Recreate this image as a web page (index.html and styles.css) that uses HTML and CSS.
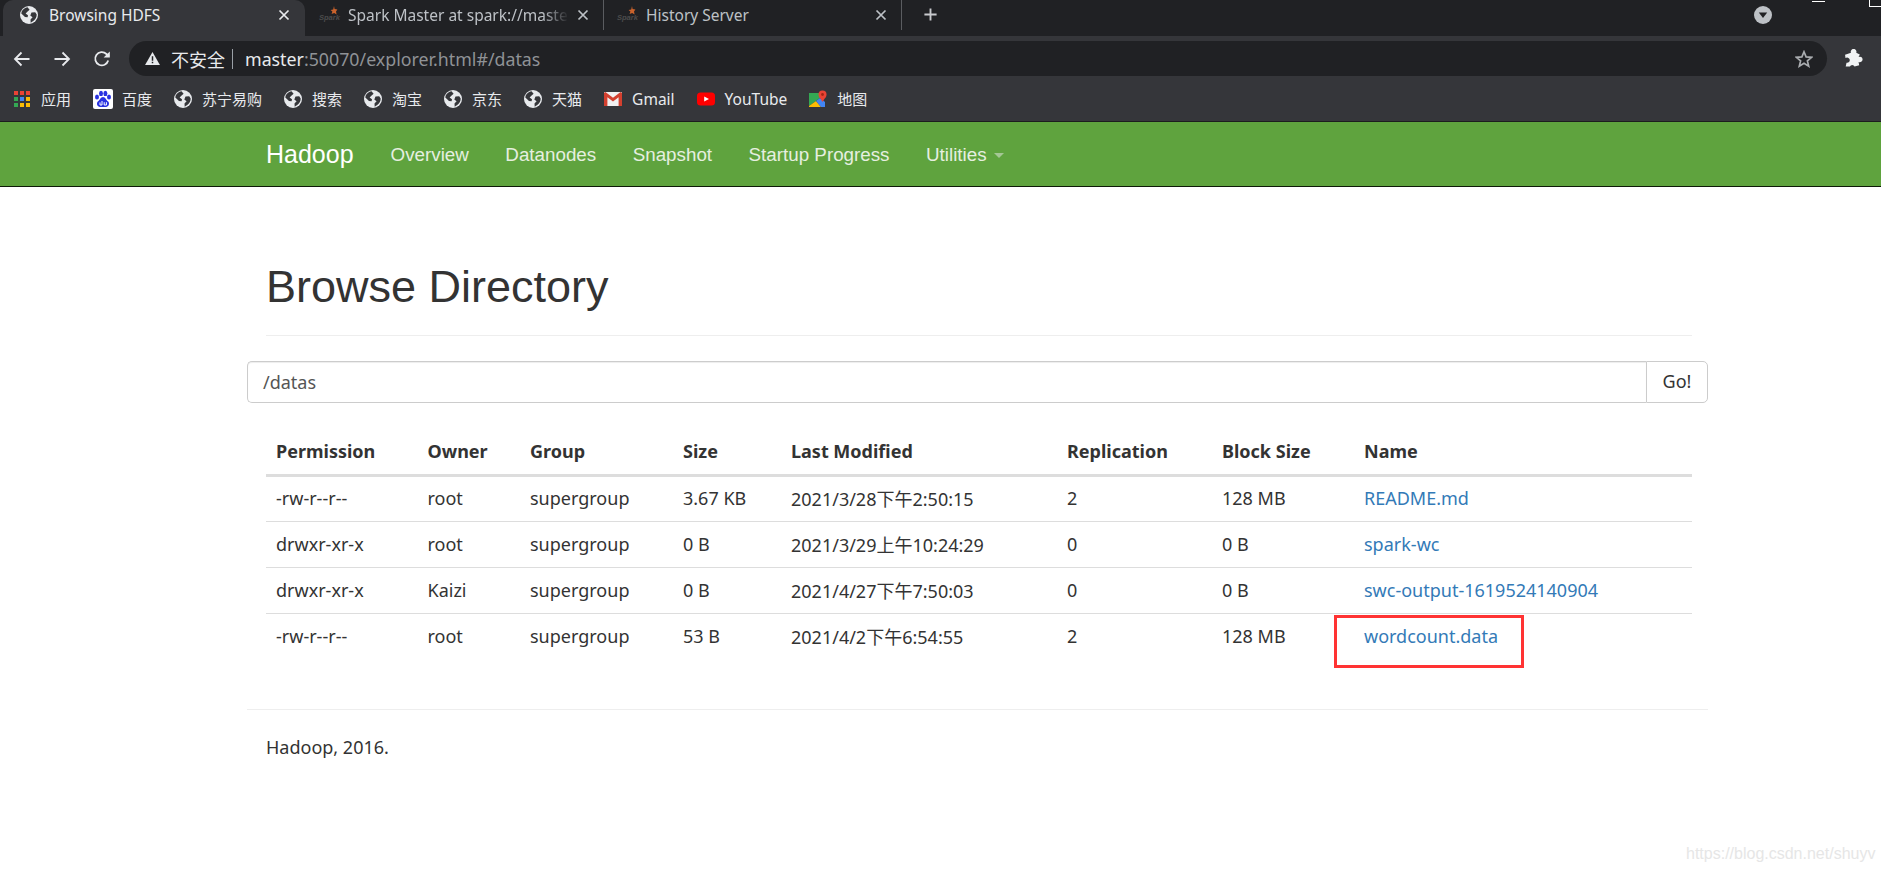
FILE: index.html
```html
<!DOCTYPE html>
<html lang="zh">
<head>
<meta charset="utf-8">
<title>Browsing HDFS</title>
<link rel="stylesheet" href="styles.css">
</head>
<body>
<svg class="defs" width="0" height="0" aria-hidden="true">
  <symbol id="globe" viewBox="0 0 18 18">
    <circle cx="9" cy="9" r="9" fill="#e8eaed"/>
    <path d="M7.5 1.2 C5 1.6 2.8 3.2 1.7 5.4 L1.3 7.6 L5 11 L7.6 11.3 L8 9.3 L5.6 7.4 L7.6 5.6 L9.6 3.8 Z" fill="#35363a"/>
    <path d="M11.5 6.6 L15.2 6.2 L16.7 8.4 C16.7 11 15.4 13.4 13.2 15.1 L10.7 16.7 L10.5 13.4 L12.6 11.2 L10.3 9.4 Z" fill="#35363a"/>
  </symbol>
  <symbol id="spark" viewBox="0 0 18 18" overflow="visible">
    <text x="-2" y="14" font-family="Liberation Sans" font-size="7.5" font-style="italic" font-weight="700" fill="#4c4c4c">Spark</text>
    <path d="M13 0 L13.6 3 L16.4 3.6 L15 5.4 L15.6 8.6 L13.2 7 L10.6 8 L11.4 5.4 L9.6 4 L12.2 3.4 Z" fill="#c9622c"/>
  </symbol>
  <symbol id="close" viewBox="0 0 12 12">
    <path d="M1.5 1.5 L10.5 10.5 M10.5 1.5 L1.5 10.5" fill="none" stroke="currentColor" stroke-width="1.7"/>
  </symbol>
</svg>

<header class="chrome">
  <div class="tabstrip">
    <div class="tab tab-active">
      <svg class="favicon"><use href="#globe"/></svg>
      <span class="tab-title">Browsing HDFS</span>
      <svg class="tab-close"><use href="#close"/></svg>
    </div>
    <div class="tab">
      <svg class="favicon"><use href="#spark"/></svg>
      <span class="tab-title tab-fade">Spark Master at spark://master</span>
      <svg class="tab-close"><use href="#close"/></svg>
    </div>
    <div class="tab">
      <svg class="favicon"><use href="#spark"/></svg>
      <span class="tab-title">History Server</span>
      <svg class="tab-close"><use href="#close"/></svg>
    </div>
    <svg class="newtab" viewBox="0 0 16 16"><path d="M8 1.5 V14.5 M1.5 8 H14.5" fill="none" stroke="#c8cacd" stroke-width="2"/></svg>
    <svg class="profile-menu" viewBox="0 0 18 18"><circle cx="9" cy="9" r="9" fill="#bdc1c6"/><path d="M4.8 6.6 H13.2 L9 12 Z" fill="#202124"/></svg>
  </div>
  <div class="toolbar">
    <div class="navrow">
      <svg class="navbtn" viewBox="0 0 18 18"><path d="M16.5 9 H2 M8.5 2.5 L2 9 L8.5 15.5" fill="none" stroke="#e8eaed" stroke-width="1.8"/></svg>
      <svg class="navbtn" viewBox="0 0 18 18"><path d="M1.5 9 H16 M9.5 2.5 L16 9 L9.5 15.5" fill="none" stroke="#e8eaed" stroke-width="1.8"/></svg>
      <svg class="navbtn" viewBox="0 0 18 18"><path d="M15.2 10.5 A6.6 6.6 0 1 1 13.4 4 L16 6.4" fill="none" stroke="#e8eaed" stroke-width="1.8"/><path d="M16.8 1.4 V7.6 H10.6 Z" fill="#e8eaed"/></svg>
      <div class="omnibox">
        <svg class="warn" viewBox="0 0 16 14"><path d="M8 0 L16 14 H0 Z" fill="#e8eaed"/><path d="M7.2 4.6 H8.8 V9.4 H7.2 Z M7.2 10.6 H8.8 V12.2 H7.2 Z" fill="#202124"/></svg>
        <span class="insecure">不安全</span>
        <span class="omni-sep"></span>
        <span class="url"><span class="url-host">master</span>:50070/explorer.html#/datas</span>
        <svg class="star" viewBox="0 0 18 18"><path d="M9 1.8 L11.1 6.9 L16.6 7.3 L12.4 10.9 L13.7 16.2 L9 13.3 L4.3 16.2 L5.6 10.9 L1.4 7.3 L6.9 6.9 Z" fill="none" stroke="#a9acaf" stroke-width="1.7"/></svg>
      </div>
      <svg class="puzzle" viewBox="0 0 18 18"><path d="M6.6 3.6 A2.7 2.7 0 1 1 11.6 3.6 L15 5.2 L13.8 7.6 A2.6 2.6 0 1 1 13.8 12.2 L14.4 15.4 L10 16.6 A2.4 2.4 0 0 0 5.6 16.6 L1.6 16.6 L2.4 13 A2.5 2.5 0 1 0 1.4 8.6 L1 5.4 Z" fill="#f1f3f4"/></svg>
    </div>
    <nav class="bookmarks">
      <a class="bm">
        <svg class="bm-icon" viewBox="0 0 18 18"><g fill="#ea4335"><rect x="1" y="1" width="4" height="4"/><rect x="7" y="1" width="4" height="4"/><rect x="13" y="1" width="4" height="4"/></g><g fill="#34a853"><rect x="1" y="7" width="4" height="4"/><rect x="1" y="13" width="4" height="4"/></g><rect x="7" y="7" width="4" height="4" fill="#4285f4"/><rect x="13" y="7" width="4" height="4" fill="#fbbc05"/><rect x="7" y="13" width="4" height="4" fill="#fbbc05"/><rect x="13" y="13" width="4" height="4" fill="#fbbc05"/></svg>
        <span>应用</span>
      </a>
      <a class="bm">
        <svg class="bm-icon bm-wide" viewBox="0 0 20 20"><rect width="20" height="20" rx="2" fill="#fff"/><g fill="#2932e1"><ellipse cx="4" cy="8" rx="2" ry="2.6"/><ellipse cx="8" cy="4.4" rx="2" ry="2.7"/><ellipse cx="12.4" cy="4.4" rx="2" ry="2.7"/><ellipse cx="16" cy="8" rx="2" ry="2.6"/><path d="M10 8 C7.5 8 7 11 4.8 12.6 C3 14.6 4.4 18 7 18 H13 C15.6 18 17 14.6 15.2 12.6 C13 11 12.5 8 10 8 Z"/></g><path d="M7 13.4 V16 H9 M9 12 V16 M11.2 13.2 V16 H13.4 V13.2" fill="none" stroke="#fff" stroke-width="1"/></svg>
        <span>百度</span>
      </a>
      <a class="bm"><svg class="bm-icon"><use href="#globe"/></svg><span>苏宁易购</span></a>
      <a class="bm"><svg class="bm-icon"><use href="#globe"/></svg><span>搜索</span></a>
      <a class="bm"><svg class="bm-icon"><use href="#globe"/></svg><span>淘宝</span></a>
      <a class="bm"><svg class="bm-icon"><use href="#globe"/></svg><span>京东</span></a>
      <a class="bm"><svg class="bm-icon"><use href="#globe"/></svg><span>天猫</span></a>
      <a class="bm bm-latin">
        <svg class="bm-icon" viewBox="0 0 18 18"><rect x="0" y="2" width="18" height="14" rx="1" fill="#f1f1f1"/><path d="M0 3 V16 H3.4 V7.2 L9 11.4 L14.6 7.2 V16 H18 V3 L16.6 2 L9 7.8 L1.4 2 Z" fill="#d3402f"/></svg>
        <span>Gmail</span>
      </a>
      <a class="bm bm-latin">
        <svg class="bm-icon" viewBox="0 0 18 18"><rect x="0" y="2.5" width="18" height="13" rx="3.5" fill="#f00"/><path d="M7.2 6.4 L12 9 L7.2 11.6 Z" fill="#fff"/></svg>
        <span>YouTube</span>
      </a>
      <a class="bm">
        <svg class="bm-icon" viewBox="0 0 18 18"><path d="M0 3 L11 3 L11 8 L0 16 Z" fill="#34a853"/><path d="M0 16 L7 11 L12 17 H0 Z" fill="#fbbc05"/><path d="M7 11 L11 8 L16 12 V17 H12 Z" fill="#4285f4"/><circle cx="13.5" cy="4.5" r="4" fill="#ea4335"/><path d="M10.2 6.8 L13.5 12 L16.8 6.8 Z" fill="#ea4335"/><circle cx="13.5" cy="4.5" r="1.4" fill="#a52714"/></svg>
        <span>地图</span>
      </a>
    </nav>
  </div>
  <span class="win-min"></span>
  <span class="win-max"></span>
</header>

<nav class="navbar">
  <a class="brand">Hadoop</a>
  <a class="nav-link">Overview</a>
  <a class="nav-link">Datanodes</a>
  <a class="nav-link">Snapshot</a>
  <a class="nav-link">Startup Progress</a>
  <a class="nav-link">Utilities<span class="caret"></span></a>
</nav>

<main class="container">
  <div class="page-header"><h1>Browse Directory</h1></div>
  <div class="input-group">
    <div class="path-input">/datas</div>
    <button class="go-btn" type="button">Go!</button>
  </div>
  <table class="listing">
    <thead>
      <tr>
        <th class="c1">Permission</th><th class="c2">Owner</th><th class="c3">Group</th><th class="c4">Size</th>
        <th class="c5">Last Modified</th><th class="c6">Replication</th><th class="c7">Block Size</th><th class="c8">Name</th>
      </tr>
    </thead>
    <tbody>
      <tr><td>-rw-r--r--</td><td>root</td><td>supergroup</td><td>3.67 KB</td><td>2021/3/28下午2:50:15</td><td>2</td><td>128 MB</td><td><a>README.md</a></td></tr>
      <tr><td>drwxr-xr-x</td><td>root</td><td>supergroup</td><td>0 B</td><td>2021/3/29上午10:24:29</td><td>0</td><td>0 B</td><td><a>spark-wc</a></td></tr>
      <tr><td>drwxr-xr-x</td><td>Kaizi</td><td>supergroup</td><td>0 B</td><td>2021/4/27下午7:50:03</td><td>0</td><td>0 B</td><td><a>swc-output-1619524140904</a></td></tr>
      <tr><td>-rw-r--r--</td><td>root</td><td>supergroup</td><td>53 B</td><td>2021/4/2下午6:54:55</td><td>2</td><td>128 MB</td><td><a>wordcount.data</a></td></tr>
    </tbody>
  </table>
  <footer class="page-footer"><p>Hadoop, 2016.</p></footer>
</main>

<div class="annotation"></div>
<div class="watermark">https://blog.csdn.net/shuyv</div>
</body>
</html>
```
FILE: styles.css
```css
* { box-sizing: border-box; }
html, body { margin: 0; padding: 0; }
body {
  width: 1881px;
  height: 872px;
  overflow: hidden;
  position: relative;
  background: #fff;
  color: #333;
  font-family: "Noto Sans", "Noto Sans CJK SC", sans-serif;
}
.defs { position: absolute; }

/* Browser chrome */
.chrome { position: relative; height: 122px; background: #35363a; border-bottom: 1px solid #1c1c1e; }
.tabstrip { display: flex; align-items: flex-start; height: 36px; background: #202124; position: relative; }
.tab {
  display: flex; align-items: center;
  width: 298px; height: 30px;
  padding: 0 14px 0 15px;
  color: #bdc1c6;
  border-right: 1px solid #5a5c60;
}
.tab-active {
  width: 302px; height: 36px; margin-left: 3px;
  padding: 0 15px 6px 17px;
  margin-right: 1px;
  color: #e8eaed;
  background: #35363a;
  border-right: 0;
  border-radius: 10px 10px 0 0;
}
.favicon { width: 18px; height: 18px; flex: none; overflow: visible; }
.tab-title {
  flex: 1; min-width: 0; margin-left: 9px;
  font-size: 15.5px; white-space: nowrap; overflow: hidden;
}
.tab-active .tab-title { margin-left: 11px; }
.tab-fade {
  -webkit-mask-image: linear-gradient(to right, #000 88%, transparent 100%);
  mask-image: linear-gradient(to right, #000 88%, transparent 100%);
}
.tab-close { width: 12px; height: 12px; flex: none; margin-left: 8px; }
.newtab { width: 15px; height: 15px; margin: 7px 0 0 21px; flex: none; }
.profile-menu { width: 18px; height: 18px; position: absolute; left: 1754px; top: 6px; }

.toolbar { height: 85px; padding-top: 5px; }
.navrow { display: flex; align-items: center; height: 35px; padding-left: 13px; }
.navbtn { width: 18px; height: 18px; margin-right: 22px; flex: none; }
.navbtn:nth-child(3) { margin-right: 18px; }
.omnibox {
  display: flex; align-items: center;
  width: 1698px; height: 35px; padding: 0 14px 0 16px;
  background: #202124; border-radius: 18px;
}
.warn { width: 15px; height: 13px; flex: none; }
.insecure { margin-left: 11px; font-size: 18px; color: #e8eaed; }
.omni-sep { width: 1px; height: 20px; margin: 0 12px 0 7px; background: #9aa0a6; }
.url { flex: 1; font-size: 17.8px; color: #8f9296; }
.url-host { color: #e8eaed; }
.star { width: 18px; height: 18px; flex: none; }
.puzzle { width: 19px; height: 19px; margin-left: 17px; flex: none; }

.bookmarks { display: flex; align-items: center; gap: 22px; height: 45px; padding: 0 0 0 13px; }
.bm { display: flex; align-items: center; gap: 10px; color: #e8eaed; font-size: 15px; white-space: nowrap; }
.bm-latin { font-size: 15.5px; }
.bm-icon { width: 18px; height: 18px; flex: none; }
.bm-wide { width: 20px; height: 20px; margin-right: -1px; }

.win-min { position: absolute; left: 1812px; top: 1px; width: 13px; height: 1px; background: #fff; }
.win-max { position: absolute; left: 1869px; top: -5px; width: 14px; height: 12px; border: 1px solid #fff; }

/* Hadoop navbar */
.navbar {
  display: flex; align-items: center;
  height: 65px; padding: 1px 0 0 266px;
  background: #5fa33e;
  border-bottom: 1px solid #0e1a08;
  font-family: "Liberation Sans", sans-serif;
}
.brand { font-size: 25px; color: #fff; margin-right: 37px; }
.nav-link { font-size: 18.8px; color: #e6efe0; margin-right: 36.5px; }
.caret {
  display: inline-block; margin-left: 7px; vertical-align: middle;
  border-top: 5px solid #a5c795; border-left: 5px solid transparent; border-right: 5px solid transparent;
}

/* Page body */
.container { margin-left: 247px; width: 1461px; }
.page-header { margin: 0 16px 0 19px; padding-top: 75px; height: 149px; border-bottom: 1px solid #eee; }
h1 {
  margin: 0;
  font: 400 45px/50px "Liberation Sans", sans-serif;
  color: #333;
}
.input-group { display: flex; height: 42px; margin-top: 25px; font-size: 18px; color: #555; }
.path-input {
  flex: 1; padding: 0 15px; line-height: 40px;
  border: 1px solid #ccc; border-right: 0; border-radius: 5px 0 0 5px;
  box-shadow: inset 0 1px 1px rgba(0,0,0,.075);
}
.go-btn {
  width: 62px; padding: 0 0 2px;
  font: inherit; color: #333; background: #fff;
  border: 1px solid #ccc; border-radius: 0 5px 5px 0;
}
.listing {
  table-layout: fixed; border-collapse: collapse;
  width: 1426px; margin: 26px 16px 0 19px;
  font-size: 18px; color: #333;
}
.listing th { height: 46px; padding: 0 0 0 10px; text-align: left; font-weight: 700; border-bottom: 3px solid #ddd; }
.listing td { height: 46px; padding: 0 0 1px 10px; border-bottom: 1px solid #ddd; white-space: nowrap; }
.listing tbody tr:last-child td { border-bottom: 0; }
.listing a { color: #337ab7; }
.c1 { width: 151.5px; }
.c2 { width: 102.5px; }
.c3 { width: 153px; }
.c4 { width: 108px; }
.c5 { width: 276px; }
.c6 { width: 155px; }
.c7 { width: 142px; }
.c8 { width: 338px; }
.page-footer { margin-top: 50px; padding: 25px 19px 0; border-top: 1px solid #eee; font-size: 18px; color: #333; }
.page-footer p { margin: 0; }

/* Red hand-drawn annotation over the last row */
.annotation { position: absolute; left: 1334px; top: 615px; width: 190px; height: 53px; border: 3px solid #f33; }
.watermark {
  position: absolute; left: 1686px; top: 845px;
  font: 16px "Liberation Sans", sans-serif; color: #e6e6e6;
}
```
